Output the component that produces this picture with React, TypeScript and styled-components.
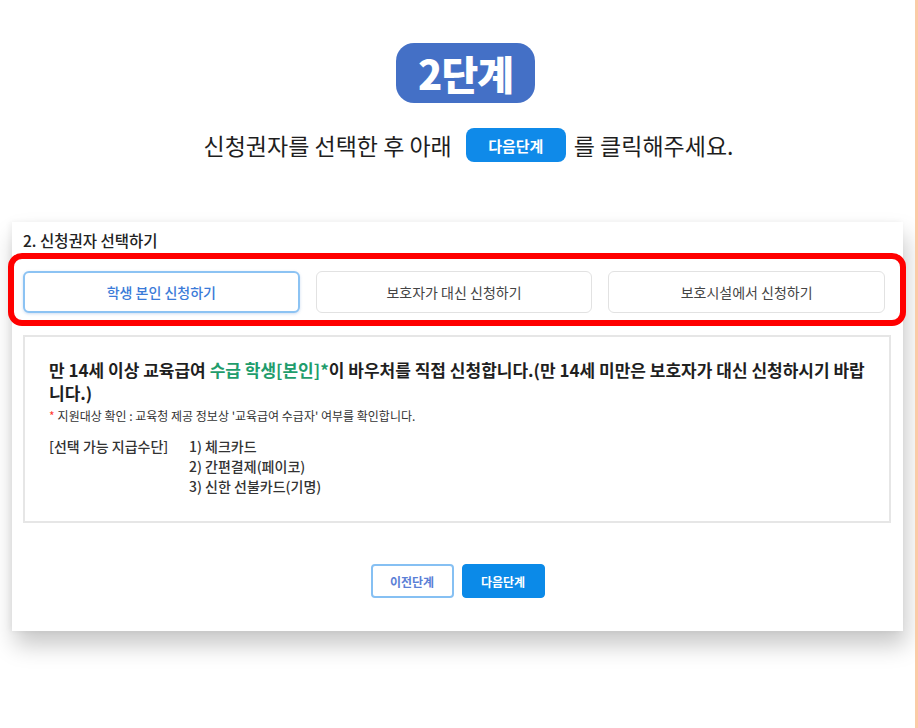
import React from 'react';
import styled, { createGlobalStyle } from 'styled-components';

const GlobalStyle = createGlobalStyle`
  html, body {
    margin: 0;
    padding: 0;
    background: #ffffff;
  }
  body {
    font-family: "Noto Sans CJK KR", "Noto Sans", sans-serif;
    color: #222222;
  }
`;

const Page = styled.div`
  display: flex;
  min-height: 100vh;
`;

const Main = styled.main`
  flex: 1;
  display: flex;
  flex-direction: column;
`;

/* thin peach rule on the right edge */
const SideRule = styled.div`
  width: 3px;
  background: #fbcaa7;
`;

const Header = styled.header`
  display: flex;
  flex-direction: column;
  align-items: center;
  padding-top: 43px;
  padding-left: 16px;
`;

const StepBadge = styled.h1`
  margin: 0;
  height: 60px;
  padding: 0 22px;
  display: inline-flex;
  align-items: center;
  background: #4470c6;
  border-radius: 18px;
  color: #ffffff;
  font-size: 40px;
  font-weight: 900;
  letter-spacing: -1px;
`;

const Guide = styled.p`
  margin: 25px 0 0;
  height: 34px;
  display: flex;
  align-items: center;
  font-size: 23px;
  color: #1e1e1e;
  padding-left: 6px;
`;

const InlineChip = styled.span`
  display: inline-flex;
  align-items: center;
  justify-content: center;
  width: 100px;
  height: 34px;
  margin: 0 8px 0 14px;
  background: #0f8ae9;
  border-radius: 8px;
  color: #ffffff;
  font-size: 15px;
  font-weight: 700;
`;

const Card = styled.section`
  margin: 60px 0 0 12px;
  width: 891px;
  box-sizing: border-box;
  padding: 8px 11px 33px;
  background: #ffffff;
  box-shadow: 3px 14px 22px rgba(0, 0, 0, 0.22), -2px 0 6px rgba(0, 0, 0, 0.05);
`;

const CardTitle = styled.h2`
  margin: 0;
  font-size: 15.5px;
  line-height: 20px;
  font-weight: 500;
  color: #222222;
`;

const ChoiceRow = styled.div`
  position: relative;
  margin-top: 21px;
  width: 862px;
  display: grid;
  grid-template-columns: repeat(3, 1fr);
  gap: 16px;
`;

const Choice = styled.button<{ $active?: boolean }>`
  height: 42px;
  box-sizing: border-box;
  border-radius: 6px;
  background: #ffffff;
  font-family: inherit;
  font-size: 14px;
  cursor: pointer;
  border: ${(p) => (p.$active ? '2px solid #8cc3f3' : '1px solid #e2e2e2')};
  box-shadow: ${(p) => (p.$active ? '0 1px 3px rgba(60, 120, 200, 0.25)' : 'none')};
  color: ${(p) => (p.$active ? '#3b7bd8' : '#444444')};
  font-weight: ${(p) => (p.$active ? 500 : 400)};
`;

/* red annotation frame drawn over the choices */
const Highlight = styled.div`
  position: absolute;
  left: -15px;
  top: -18px;
  right: -21px;
  bottom: -13px;
  border: 6px solid #ff0000;
  border-radius: 14px;
  pointer-events: none;
`;

const InfoBox = styled.div`
  margin-top: 22px;
  width: 868px;
  box-sizing: border-box;
  border: 2px solid #e6e6e6;
  padding: 21px 16px 25px 24px;
`;

const Lead = styled.p`
  margin: 0;
  font-size: 17px;
  line-height: 23px;
  font-weight: 700;
  color: #1f1f1f;
`;

const Green = styled.span`
  color: #1f9d6c;
`;

const Note = styled.p`
  margin: 4px 0 0;
  font-size: 12px;
  line-height: 16px;
  color: #333333;
`;

const Star = styled.span`
  color: #ff3b30;
  margin-right: 3px;
`;

const PayRow = styled.div`
  margin-top: 12px;
  display: flex;
  font-size: 14px;
  line-height: 20px;
  font-weight: 500;
  color: #333333;
`;

const PayLabel = styled.div`
  width: 140px;
`;

const PayList = styled.ul`
  margin: 0;
  padding: 0;
  list-style: none;
`;

const Actions = styled.div`
  margin-top: 41px;
  display: flex;
  justify-content: center;
  gap: 8px;
`;

const ActionButton = styled.button<{ $primary?: boolean }>`
  width: 83px;
  height: 34px;
  box-sizing: border-box;
  border-radius: 4px;
  font-family: inherit;
  font-size: 12px;
  font-weight: 700;
  cursor: pointer;
  border: ${(p) => (p.$primary ? '1px solid #0b8ae8' : '2px solid #86c0f3')};
  background: ${(p) => (p.$primary ? '#0b8ae8' : '#ffffff')};
  color: ${(p) => (p.$primary ? '#ffffff' : '#5b7fd6')};
`;

const choices = ['학생 본인 신청하기', '보호자가 대신 신청하기', '보호시설에서 신청하기'];
const payments = ['1) 체크카드', '2) 간편결제(페이코)', '3) 신한 선불카드(기명)'];

export default function App() {
  return (
    <Page>
      <GlobalStyle />
      <Main>
        <Header>
          <StepBadge>2단계</StepBadge>
          <Guide>
            신청권자를 선택한 후 아래
            <InlineChip>다음단계</InlineChip>를 클릭해주세요.
          </Guide>
        </Header>

        <Card>
          <CardTitle>2. 신청권자 선택하기</CardTitle>
          <ChoiceRow>
            {choices.map((label, i) => (
              <Choice key={label} $active={i === 0}>
                {label}
              </Choice>
            ))}
            <Highlight />
          </ChoiceRow>

          <InfoBox>
            <Lead>
              만 14세 이상 교육급여 <Green>수급 학생[본인]*</Green>이 바우처를 직접 신청합니다.(만 14세
              미만은 보호자가 대신 신청하시기 바랍니다.)
            </Lead>
            <Note>
              <Star>*</Star>지원대상 확인 : 교육청 제공 정보상 '교육급여 수급자' 여부를 확인합니다.
            </Note>
            <PayRow>
              <PayLabel>[선택 가능 지급수단]</PayLabel>
              <PayList>
                {payments.map((p) => (
                  <li key={p}>{p}</li>
                ))}
              </PayList>
            </PayRow>
          </InfoBox>

          <Actions>
            <ActionButton>이전단계</ActionButton>
            <ActionButton $primary>다음단계</ActionButton>
          </Actions>
        </Card>
      </Main>
      <SideRule />
    </Page>
  );
}
